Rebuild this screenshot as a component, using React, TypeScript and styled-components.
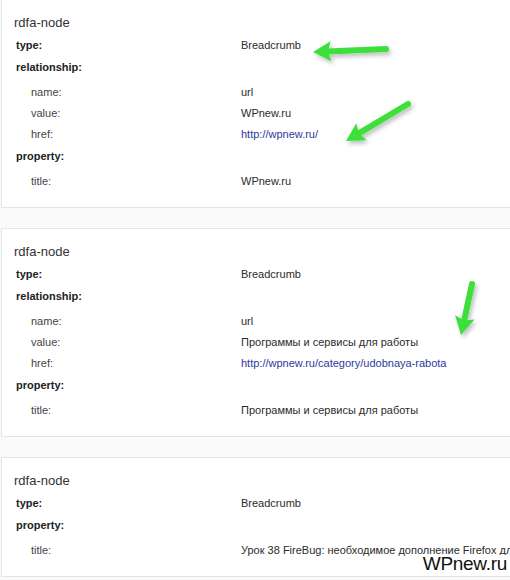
import React from "react";
import styled, { createGlobalStyle } from "styled-components";

const GlobalStyle = createGlobalStyle`
	html, body {
		margin: 0;
		padding: 0;
		background: #fafafa;
		overflow: hidden;
	}
	body {
		width: 510px;
		height: 580px;
		font-family: "Liberation Sans", Arial, sans-serif;
		color: #333;
	}
`;

const Page = styled.div`
	position: relative;
	width: 510px;
	height: 580px;
	overflow: hidden;
`;

const List = styled.div`
	display: flex;
	flex-direction: column;
	gap: 20px;
	margin-top: -1px;
	padding-left: 1px;
`;

const Card = styled.section`
	width: 540px;
	background: #fff;
	border: 1px solid #e4e4e4;
	padding: 12px 0 15px 12px;
	box-sizing: border-box;
`;

const CardTitle = styled.div`
	font-size: 13px;
	line-height: 22px;
	color: #333;
`;

const Row = styled.div<{ $child?: boolean }>`
	display: grid;
	grid-template-columns: ${(p) => (p.$child ? "210px" : "225px")} 1fr;
	padding-left: ${(p) => (p.$child ? "17px" : "2px")};
	height: ${(p) => (p.$child ? "21px" : "22px")};
	line-height: ${(p) => (p.$child ? "21px" : "22px")};
	font-size: 11px;
	white-space: nowrap;
`;

const Label = styled.span<{ $bold?: boolean }>`
	font-weight: ${(p) => (p.$bold ? 700 : 400)};
	color: ${(p) => (p.$bold ? "#222" : "#444")};
`;

const Value = styled.span<{ $link?: boolean }>`
	color: ${(p) => (p.$link ? "#2a3a9e" : "#2b2b2b")};
	text-decoration: none;
`;

const Children = styled.div`
	padding-top: 4px;
`;

const Watermark = styled.div`
	position: absolute;
	right: 3px;
	bottom: 8px;
	background: #fff;
	padding: 0 0 0 6px;
	font-size: 19px;
	line-height: 17px;
	letter-spacing: -0.3px;
	color: #111;
`;

const Overlay = styled.svg`
	position: absolute;
	left: 0;
	top: 0;
	pointer-events: none;
`;

type Item = { label: string; value?: string; href?: boolean };
type Group = { label: string; value?: string; items?: Item[] };

const nodes: Group[][] = [
	[
		{ label: "type:", value: "Breadcrumb" },
		{
			label: "relationship:",
			items: [
				{ label: "name:", value: "url" },
				{ label: "value:", value: "WPnew.ru" },
				{ label: "href:", value: "http://wpnew.ru/", href: true },
			],
		},
		{ label: "property:", items: [{ label: "title:", value: "WPnew.ru" }] },
	],
	[
		{ label: "type:", value: "Breadcrumb" },
		{
			label: "relationship:",
			items: [
				{ label: "name:", value: "url" },
				{ label: "value:", value: "Программы и сервисы для работы" },
				{
					label: "href:",
					value: "http://wpnew.ru/category/udobnaya-rabota",
					href: true,
				},
			],
		},
		{
			label: "property:",
			items: [{ label: "title:", value: "Программы и сервисы для работы" }],
		},
	],
	[
		{ label: "type:", value: "Breadcrumb" },
		{
			label: "property:",
			items: [
				{
					label: "title:",
					value: "Урок 38 FireBug: необходимое дополнение Firefox для веб-мастера",
				},
			],
		},
	],
];

function Arrow(props: { x1: number; y1: number; x2: number; y2: number }) {
	const { x1, y1, x2, y2 } = props;
	const a = Math.atan2(y2 - y1, x2 - x1);
	const len = 18;
	const w = 10;
	const bx = x2 - Math.cos(a) * len;
	const by = y2 - Math.sin(a) * len;
	const nx = -Math.sin(a);
	const ny = Math.cos(a);
	const head = `${x2},${y2} ${bx + nx * w},${by + ny * w} ${bx + Math.cos(a) * 3},${by + Math.sin(a) * 3} ${bx - nx * w},${by - ny * w}`;
	return (
		<g filter="url(#shadow)">
			<line
				x1={x1}
				y1={y1}
				x2={bx + Math.cos(a) * 4}
				y2={by + Math.sin(a) * 4}
				stroke="#3ee03a"
				strokeWidth={6}
				strokeLinecap="round"
			/>
			<polygon points={head} fill="#3ee03a" />
		</g>
	);
}

export default function App(): JSX.Element {
	return (
		<Page>
			<GlobalStyle />
			<List>
				{nodes.map((groups, i) => (
					<Card key={i}>
						<CardTitle>rdfa-node</CardTitle>
						{groups.map((g) => (
							<div key={g.label}>
								<Row>
									<Label $bold>{g.label}</Label>
									<Value>{g.value}</Value>
								</Row>
								{g.items && (
									<Children>
										{g.items.map((it) => (
											<Row $child key={it.label}>
												<Label>{it.label}</Label>
												{it.href ? (
													<Value as="a" href="#" $link>
														{it.value}
													</Value>
												) : (
													<Value>{it.value}</Value>
												)}
											</Row>
										))}
									</Children>
								)}
							</div>
						))}
					</Card>
				))}
			</List>
			<Overlay width={510} height={580}>
				<defs>
					<filter id="shadow" x="-30%" y="-30%" width="160%" height="160%">
						<feDropShadow dx="2" dy="3" stdDeviation="2" floodColor="#000" floodOpacity="0.25" />
					</filter>
				</defs>
				<Arrow x1={386} y1={49} x2={313} y2={52} />
				<Arrow x1={408} y1={104} x2={346} y2={141} />
				<Arrow x1={472} y1={284} x2={461} y2={335} />
			</Overlay>
			<Watermark>WPnew.ru</Watermark>
		</Page>
	);
}
